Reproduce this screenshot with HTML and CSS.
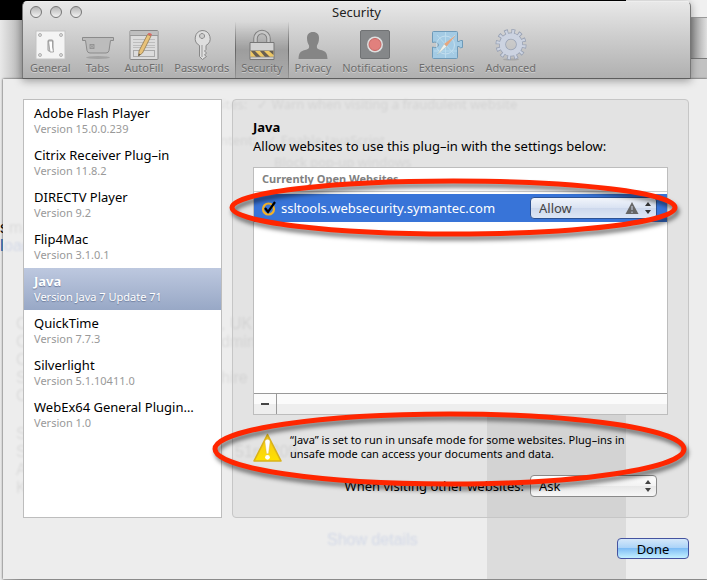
FILE: index.html
```html
<!DOCTYPE html>
<html lang="en">
<head>
<meta charset="utf-8">
<title>Security</title>
<link rel="stylesheet" href="styles.css">
</head>
<body>
<main class="desktop">
  <div class="menubar-strip"></div>
  <div class="corner"></div>
  <div class="behind-link" aria-hidden="true"><b>s</b><i>l</i></div>
  <header class="window">
    <div class="titlebar">
      <div class="lights">
        <button class="light" type="button" aria-label="Close"></button>
        <button class="light" type="button" aria-label="Minimize"></button>
        <button class="light" type="button" aria-label="Zoom"></button>
      </div>
      <h1 class="title">Security</h1>
    </div>
    <nav class="toolbar" aria-label="Preferences">
      <button class="tool" type="button">
        <svg class="icon" viewBox="0 0 32 32"><rect x="2" y="2" width="29" height="28" fill="#f4f4f4" stroke="#c4c4c4"/><g fill="#ddd" stroke="#999" stroke-width=".7"><circle cx="6" cy="6" r="1.500"/><circle cx="27" cy="6" r="1.500"/><circle cx="6" cy="26" r="1.500"/><circle cx="27" cy="26" r="1.500"/></g><rect x="14" y="11" width="5" height="11" rx="1" fill="#ddd" stroke="#999"/><path d="M14.500 12h4v6l1 5h-3.500z" fill="#fff" stroke="#888" stroke-width=".7"/></svg>
        <span>General</span></button>
      <button class="tool" type="button">
        <svg class="icon" viewBox="0 0 32 32"><ellipse cx="16" cy="28.500" rx="12" ry="1.500" fill="#888" opacity=".5"/><path d="M.5 8.500h31v3h-3l-1.500 10q-.5 2.500-3 2.500h-16q-2.500 0-3-2.500l-1.500-10h-3z" fill="#bcbcbc" stroke="#8b8b8b"/><path d="M8 15.500h4v4H8zM8 15.500l4 4m0-4l-4 4" fill="none" stroke="#8b8b8b" stroke-width=".8"/></svg>
        <span>Tabs</span></button>
      <button class="tool" type="button">
        <svg class="icon" viewBox="0 0 32 32"><rect x="2" y="1.500" width="28" height="29" rx="1" fill="#dcdcdc" stroke="#888"/><path d="M2.500 2h27v4h-27z" fill="#bfbfbf"/><path d="M2 6.500h28" stroke="#999"/><path d="M5 10.500h22M5 13.500h22M5 16.500h22M5 18.500h22" stroke="#bdbdbd"/><rect x="5.500" y="21.500" width="21" height="6" fill="none" stroke="#aaa"/><path d="M19.500 5.500l3.500 1.500-8.500 17-4 3 .5-5z" fill="#e8c27a" stroke="#91794e" stroke-width=".8"/><path d="M19.500 5.500l1-1.500q2.500-.5 3.500 1.500l-1 1.500z" fill="#d86b65"/><path d="M10.500 27l.3-2.500 1.700 1z" fill="#555"/></svg>
        <span>AutoFill</span></button>
      <button class="tool" type="button">
        <svg class="icon" viewBox="0 0 32 32"><path fill-rule="evenodd" d="M16 1.500a8 8 0 0 1 4 15v4l-1.500 1.500 2 2-2 2 2 1.500-4 3-3-3V16.500a8 8 0 0 1 2.500-15zM16 4.500a2.500 2.500 0 1 0 .1 0z" fill="#dedede" stroke="#888"/><path d="M16 16v12" stroke="#999"/></svg>
        <span>Passwords</span></button>
      <button class="tool tool-active" type="button" aria-current="page">
        <svg class="icon" viewBox="0 0 32 32"><path d="M9.500 14V9.500a6.500 6.500 0 0 1 13 0V14" fill="none" stroke="#808080" stroke-width="4.500"/><path d="M9.500 14V9.500a6.500 6.500 0 0 1 13 0V14" fill="none" stroke="#c8c8c8" stroke-width="2.500"/><path d="M4 13.500h24v17H4z" fill="#d2d2d2" stroke="#777"/><path d="M4.500 21.500h23v6.500h-23z" fill="#ecc765"/><path d="M5 22h4l6 6h-5zM14 22h4l6 6h-5zM23 22h4.500v4z" fill="#675f52"/><path d="M4 21.500h24M4 28h24" stroke="#888" stroke-width=".7"/></svg>
        <span>Security</span></button>
      <button class="tool" type="button">
        <svg class="icon" viewBox="0 0 32 32"><path d="M16 3c4 0 6 2.500 6 6 0 4-1 5.500-2 7.500-.5 3 .5 3.500 4 4.500 5 1.500 6 2.500 6.500 9h-29c.5-6.500 1.500-7.500 6.500-9 3.500-1 4.500-1.500 4-4.500-1-2-2-3.500-2-7.500 0-3.500 2-6 6-6z" fill="#858585"/></svg>
        <span>Privacy</span></button>
      <button class="tool" type="button">
        <svg class="icon" viewBox="0 0 32 32"><rect x="1.500" y="1.500" width="29" height="28" rx="1.500" fill="#858789" stroke="#707274"/><circle cx="16" cy="15.500" r="8" fill="#dedede"/><circle cx="16" cy="15.500" r="6" fill="#e1807d" stroke="#c76764"/></svg>
        <span>Notifications</span></button>
      <button class="tool" type="button">
        <svg class="icon" viewBox="0 0 32 32"><path d="M2.500 2.500h23q1 0 1 1v9h1.500q1-1.500 3.500-1v7q-2.500 1-3.500-1h-1.500v11q0 1-1 1h-23q-1 0-1-1v-10.500q5 2 6-2-1-4-6-2.500v-10q0-1 1-1z" fill="#a4cbe4" stroke="#6e9ab8"/><path d="M14.500 3v26M3 22h23M6 6l17 19M24 6L6 25" stroke="#bfdff0" stroke-width=".8"/><circle cx="14.500" cy="16" r="9" fill="none" stroke="#c4dfef"/><path d="M25 6L15.500 17.500l-2.500-2.500z" fill="#e7a67d"/><path d="M6 26l7-11 2.500 2.500z" fill="#f2f0eb" stroke="#9bb" stroke-width=".4"/></svg>
        <span>Extensions</span></button>
      <button class="tool" type="button">
        <svg class="icon" viewBox="0 0 32 32"><ellipse cx="16" cy="30.500" rx="8" ry="1" fill="#888" opacity=".4"/><g fill="none"><circle cx="16" cy="15.500" r="12.500" stroke="#98a1b3" stroke-width="6" stroke-dasharray="3.500 3.045"/><circle cx="16" cy="15.500" r="8.500" stroke="#98a1b3" stroke-width="7"/><circle cx="16" cy="15.500" r="12" stroke="#ccd3e1" stroke-width="5.500" stroke-dasharray="2 4.283" stroke-dashoffset="-.7"/><circle cx="16" cy="15.500" r="8.500" stroke="#ccd3e1" stroke-width="5.500"/></g></svg>
        <span>Advanced</span></button>
    </nav>
  </header>

  <section class="sheet" aria-label="Plug-in settings">
    <div class="ghosts" aria-hidden="true">
      <i class="shade"></i>
      <span class="g g1">sites: &nbsp; ✓ Warn when visiting a fraudulent website</span>
      <span class="g g2">ntent: &nbsp; ✓ Enable JavaScript</span>
      <span class="g g3">Block pop-up windows</span>
      <span class="g g4">C<br>C<br>C<br>S<br>C</span>
      <span class="g g5">S<br>S<br>A<br>K</span>
      <span class="g g6">, UK<br>dmin<br><br>hire</span>
      <span class="g g7">51m 209</span>
      <span class="g g8">Show details</span>
      <span class="g g9">m</span>
      <span class="g g10">oad</span>
    </div>
    <div class="columns">
      <ul class="plugins">
        <li class="plugin"><b>Adobe Flash Player</b><small>Version 15.0.0.239</small></li>
        <li class="plugin"><b>Citrix Receiver Plug–in</b><small>Version 11.8.2</small></li>
        <li class="plugin"><b>DIRECTV Player</b><small>Version 9.2</small></li>
        <li class="plugin"><b>Flip4Mac</b><small>Version 3.1.0.1</small></li>
        <li class="plugin plugin-active"><b>Java</b><small>Version Java 7 Update 71</small></li>
        <li class="plugin"><b>QuickTime</b><small>Version 7.7.3</small></li>
        <li class="plugin"><b>Silverlight</b><small>Version 5.1.10411.0</small></li>
        <li class="plugin"><b>WebEx64 General Plugin…</b><small>Version 1.0</small></li>
      </ul>
      <div class="panel">
        <h2 class="heading">Java</h2>
        <p class="intro">Allow websites to use this plug–in with the settings below:</p>
        <div class="sites">
          <table class="table">
            <thead><tr><th colspan="2">Currently Open Websites</th></tr></thead>
            <tbody><tr>
              <td><div class="site"><svg class="norton" viewBox="0 0 16 16"><circle cx="7.500" cy="9" r="5.500" fill="none" stroke="#f3b229" stroke-width="2.200"/><path d="M4 8l3 4L14 2" fill="none" stroke="#000" stroke-width="2.200"/></svg><label for="site-policy">ssltools.websecurity.symantec.com</label></div></td>
              <td class="policy"><div class="pop pop-blue"><select id="site-policy"><option>Allow</option><option>Ask</option><option>Block</option></select>
                <svg class="pop-warn" viewBox="0 0 14 14"><path d="M7 1l6.500 12H.5z" fill="#666"/><path d="M7 5v4M7 10.500v1.500" stroke="#b5bccb" stroke-width="1.300"/></svg>
                <svg class="pop-arrows" viewBox="0 0 6 12"><path d="M3 0l3 4H0zM3 12l3-4H0z" fill="#333"/></svg></div></td>
            </tr></tbody>
          </table>
          <div class="table-foot"><button class="minus" type="button" aria-label="Remove website"></button></div>
          <svg class="ring ring-row" aria-hidden="true"><ellipse cx="50%" cy="50%" rx="50%" ry="50%"/></svg>
        </div>
        <div class="warning">
          <svg class="warn-icon" viewBox="0 0 28 28"><defs><linearGradient id="y" x2="0" y2="1"><stop stop-color="#f3c51c"/><stop offset="1" stop-color="#ffe100"/></linearGradient></defs><path d="M14 1.500L27 27H1z" fill="url(#y)" stroke="#d9b21c" stroke-width="1.500" stroke-linejoin="round"/><path d="M11.500 8.500q0-2.500 2.500-2.500t2.500 2.500L15 20h-2z" fill="#fff" stroke="#d3b23c" stroke-width=".4"/><circle cx="14" cy="23.500" r="2.300" fill="#fff"/></svg>
          <p>“Java” is set to run in unsafe mode for some websites. Plug–ins in unsafe mode can access your documents and data.</p>
          <svg class="ring ring-warning" aria-hidden="true"><ellipse cx="50%" cy="50%" rx="50%" ry="50%"/></svg>
        </div>
        <div class="other">
          <label for="other-policy">When visiting other websites:</label>
          <div class="pop"><select id="other-policy"><option>Ask</option><option>Allow</option><option>Block</option></select>
            <svg class="pop-arrows" viewBox="0 0 6 12"><path d="M3 0l3 4H0zM3 12l3-4H0z" fill="#444"/></svg></div>
        </div>
      </div>
    </div>
    <div class="actions"><button class="done" type="button">Done</button></div>
  </section>
</main>
</body>
</html>
```

FILE: styles.css
```css
* { box-sizing: border-box; }

body {
  margin: 0;
  font-family: "Noto Sans", "Open Sans", sans-serif;
  font-size: 13px;
  line-height: 18px;
  color: #000;
}

h1, h2, p, ul { margin: 0; padding: 0; font-size: inherit; }
button, select { font: inherit; color: inherit; }

.desktop {
  position: relative;
  display: flex;
  flex-direction: column;
  min-height: 100vh;
  padding-top: 1px;
  background: linear-gradient(90deg, #e9e9e9, #b4b4b4 22px);
}

.menubar-strip {
  position: absolute;
  inset: 0 81px auto 0;
  height: 20px;
  background: #000;
}

/* Edge of the window that sits behind the preferences window */
.corner {
  position: absolute;
  top: 0;
  right: 0;
  width: 81px;
  height: 79px;
  background:
    linear-gradient(#f0f0f0 17px, #999 17px, #999 18px, transparent 18px, transparent 58px, #777 58px, #777 59px, #c2c2c2 59px),
    linear-gradient(90deg, #8c8c8c 64px, #e0e0e0);
}

.window {
  position: relative;
  z-index: 2;
  margin: 0 16px 0 22px;
  height: 78px;
  border: 1px solid #777;
  border-top-color: #eee;
  border-bottom-color: #5d5d5d;
  border-radius: 5px 5px 0 0;
  background: linear-gradient(#e8e8e8, #cecece 45%, #b0b0b0);
  box-shadow: 0 2px 8px rgba(0, 0, 0, .35);
}

.titlebar {
  display: grid;
  grid-template-columns: 1fr auto 1fr;
  align-items: center;
  height: 20px;
  padding: 0 7px;
}

.lights { display: flex; gap: 8px; }

.light {
  width: 12px;
  height: 12px;
  padding: 0;
  border: 1px solid #777;
  border-radius: 50%;
  background: linear-gradient(#b5b5b5, #f2f2f2);
}

.title { font-weight: 400; color: #222; }

.toolbar { display: flex; gap: 1px; height: 56px; padding-left: 2px; }

.tool {
  display: flex;
  flex-direction: column;
  align-items: center;
  padding: 7px 5px 0;
  border: 0;
  background: none;
  font-size: 11px;
  line-height: 14px;
  color: #6c6c6c;
  text-shadow: 0 1px 0 rgba(255, 255, 255, .4);
}

.tool-active {
  border: solid;
  border-width: 0 1px;
  border-image: linear-gradient(rgba(80, 80, 80, 0), #666 50%, rgba(80, 80, 80, .2)) 1;
  background: linear-gradient(rgba(0, 0, 0, 0), rgba(0, 0, 0, .2) 50%, rgba(0, 0, 0, .04));
}

.icon { width: 32px; height: 32px; flex: none; }

.sheet {
  position: relative;
  z-index: 1;
  flex: 1;
  margin: 0 0 1px 3px;
  padding: 20px 18px 19px 20px;
  background: #ededed;
  box-shadow: 0 0 2px #333;
}

.ghosts { position: absolute; inset: 0; overflow: hidden; }
.g { position: absolute; color: rgba(0, 0, 0, .08); filter: blur(1px); white-space: nowrap; }
.shade { position: absolute; left: 484px; top: 146px; bottom: 0; width: 139px; background: #dcdcdc; }
.g1 { left: 213px; top: 16px; }
.g2 { left: 217px; top: 52px; }
.g3 { left: 271px; top: 74px; }
.g4, .g5, .g6, .g7, .g8, .g9, .g10 { font: 16px/18px "Liberation Sans", sans-serif; }
.g4 { left: 13px; top: 236px; }
.g5 { left: 13px; top: 346px; }
.g6 { left: 218px; top: 236px; }
.g7 { left: 232px; top: 364px; }
.g8 { left: 324px; top: 452px; color: rgba(60, 100, 200, .15); }
.g9 { left: 6px; top: 140px; }
.g10 { left: 1px; top: 158px; color: rgba(60, 100, 200, .15); }

.behind-link {
  position: absolute;
  left: 0;
  top: 219px;
  display: grid;
  font: 16px/18px "Liberation Sans", sans-serif;
}
.behind-link b { font-weight: 400; }
.behind-link i { font-style: normal; color: #1c64b4; }

.columns {
  position: relative;
  display: grid;
  grid-template-columns: 199px 1fr;
  gap: 10px;
}

.plugins {
  list-style: none;
  border: 1px solid #bdbdbd;
  background: #fff;
}

.plugin {
  display: flex;
  flex-direction: column;
  height: 42px;
  padding: 4px 10px 0;
  white-space: nowrap;
}
.plugin b { font-weight: 400; }
.plugin small { font-size: 11px; line-height: 14px; color: #999; }
.plugin-active { color: #fff; background: linear-gradient(#bdc8df, #98a8c6); text-shadow: 0 1px 1px #6d7c9c; }
.plugin-active b { font-weight: 700; }
.plugin-active small { color: #fff; }

.panel {
  min-width: 0;
  padding: 18px 20px 20px;
  border: 1px solid #c6c6c6;
  border-radius: 4px;
  background: rgba(0, 0, 0, .04);
}

.heading { font-weight: 700; }
.intro { line-height: 20px; margin-bottom: 11px; }

.sites {
  position: relative;
  display: flex;
  flex-direction: column;
  height: 248px;
  border: 1px solid #bdbdbd;
  background: #fff;
}

.table { width: 100%; border-collapse: collapse; }
.table th {
  height: 23px;
  padding: 0 8px;
  border-bottom: 1px solid #ccc;
  font-size: 11px;
  line-height: 14px;
  text-align: left;
  color: #808080;
}
.table td { height: 28px; padding: 0; color: #fff; background: #3874d8; }
.table tbody::before { content: ""; display: block; height: 2px; }
.site { display: flex; align-items: center; gap: 4px; padding-left: 7px; }
.norton { width: 16px; height: 16px; }
.policy { width: 137px; }

.pop { position: relative; width: 127px; }
.pop select {
  appearance: none;
  display: block;
  width: 100%;
  height: 22px;
  padding: 0 8px;
  border: 1px solid #8a8a8a;
  border-radius: 4px;
  background: linear-gradient(#fff, #f2f2f2 50%, #e8e8e8 50%, #f7f7f7);
}
.pop-blue select { color: #444; border-color: #2c5294; background: linear-gradient(#f2f5fb, #d9e2f2 50%, #cdd8ec 50%, #dde6f5); }
.pop-arrows { position: absolute; right: 6px; top: 5px; width: 6px; height: 12px; pointer-events: none; }
.pop-warn { position: absolute; right: 18px; top: 4px; width: 14px; height: 14px; pointer-events: none; }

.table-foot {
  height: 21px;
  margin-top: auto;
  border-top: 1px solid #999;
  background: linear-gradient(#fbfbfb 50%, #eee 50%);
}
.minus {
  display: grid;
  place-items: center;
  width: 23px;
  height: 20px;
  padding: 0;
  border: 0;
  border-right: 1px solid #999;
  background: none;
}
.minus::before { content: ""; width: 8px; height: 2px; background: #444; }

.ring {
  position: absolute;
  z-index: 3;
  overflow: visible;
  pointer-events: none;
  fill: none;
  stroke: #ff2600;
  stroke-width: 5px;
  filter: drop-shadow(2px 4px 2px rgba(0, 0, 0, .5));
}
.ring-row { left: -22px; top: 13px; width: calc(100% + 30px); height: 53px; }
.ring-warning { left: -38px; top: -19px; width: calc(100% + 54px); height: 70px; }

.warning {
  position: relative;
  display: flex;
  gap: 8px;
  margin-top: 18px;
  font-size: 11px;
  line-height: 14px;
}
.warning p { padding-right: 24px; }
.warn-icon { flex: none; width: 29px; height: 29px; }

.other {
  display: flex;
  justify-content: flex-end;
  align-items: center;
  gap: 6px;
  margin: 13px 11px 0 0;
}

.actions { position: relative; display: flex; justify-content: flex-end; padding-top: 20px; }
.done {
  width: 72px;
  height: 21px;
  padding: 0;
  border: 1px solid #4553a0;
  border-radius: 4px;
  background: linear-gradient(#d5e8fa, #a8d2f8 50%, #7fbdf5 50%, #c4f0ff);
}
```
